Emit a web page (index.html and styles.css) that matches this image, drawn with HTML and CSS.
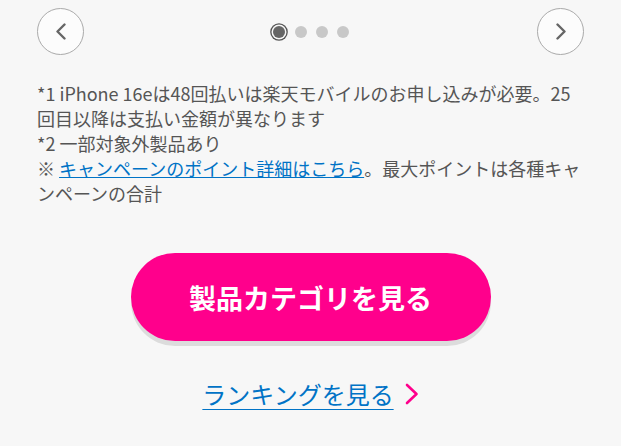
FILE: index.html
```html
<!DOCTYPE html>
<html>
<head>
    <link rel="stylesheet" href="styles.css">
</head>
<body>
    <div class="page">
        <div class="slider-nav">
            <button class="nav-btn" aria-label="前へ">
                <svg width="12" height="17" viewBox="0 0 12 17"><path d="M9.5 1.5 L2.5 8.5 L9.5 15.5" fill="none" stroke="#666" stroke-width="2.4" stroke-linecap="round" stroke-linejoin="round"/></svg>
            </button>
            <div class="dots">
                <span class="dot active"></span>
                <span class="dot"></span>
                <span class="dot"></span>
                <span class="dot"></span>
            </div>
            <button class="nav-btn" aria-label="次へ">
                <svg width="12" height="17" viewBox="0 0 12 17"><path d="M2.5 1.5 L9.5 8.5 L2.5 15.5" fill="none" stroke="#666" stroke-width="2.4" stroke-linecap="round" stroke-linejoin="round"/></svg>
            </button>
        </div>

        <div class="notes">
            <p>*1 iPhone 16eは48回払いは楽天モバイルのお申し込みが必要。25回目以降は支払い金額が異なります</p>
            <p>*2 一部対象外製品あり</p>
            <p>※ <a href="#">キャンペーンのポイント詳細はこちら</a>。最大ポイントは各種キャンペーンの合計</p>
        </div>

        <div class="cta">
            <a class="cta-btn" href="#">製品カテゴリを見る</a>
        </div>

        <div class="ranking">
            <a class="ranking-link" href="#">ランキングを見る</a>
            <svg class="ranking-arrow" width="14" height="22" viewBox="0 0 14 22"><path d="M2 2 L11.5 11 L2 20" fill="none" stroke="#ff008c" stroke-width="2.6" stroke-linecap="round" stroke-linejoin="round"/></svg>
        </div>
    </div>
</body>
</html>
```

FILE: styles.css
```css
/* ベース */
body {
    margin: 0;
    background: #f7f7f7;
    font-family: "Noto Sans CJK JP", "Noto Sans", sans-serif;
    color: #555;
}

.page {
    padding: 8px 37px 0;
}

/* スライダーのナビ */
.slider-nav {
    display: flex;
    align-items: center;
    justify-content: space-between;
}

.nav-btn {
    width: 47px;
    height: 47px;
    border: 1px solid #aaa;
    border-radius: 50%;
    background: #fcfcfc;
    display: flex;
    align-items: center;
    justify-content: center;
    padding: 0;
    cursor: pointer;
}

.dots {
    display: flex;
    align-items: center;
    gap: 9px;
}

.dot {
    width: 12px;
    height: 12px;
    border-radius: 50%;
    background: #c8c8c8;
}

.dot.active {
    background: #666;
    box-shadow: 0 0 0 1.5px #f7f7f7, 0 0 0 2.8px #555;
    margin-right: 1px;
}

/* 注釈 */
.notes {
    margin-top: 26px;
    font-size: 18px;
    line-height: 25px;
}

.notes p {
    margin: 0;
}

.notes a {
    color: #0073c6;
    text-decoration: underline;
}

/* ボタン */
.cta {
    display: flex;
    justify-content: center;
    margin-top: 47px;
}

.cta-btn {
    width: 360px;
    height: 88px;
    border-radius: 44px;
    background: #ff008c;
    box-shadow: 0 5px 0 #dcdcdc;
    color: #fff;
    font-size: 27px;
    font-weight: bold;
    text-decoration: none;
    display: flex;
    align-items: center;
    justify-content: center;
}

.ranking {
    display: flex;
    justify-content: center;
    align-items: center;
    gap: 11px;
    margin-top: 37px;
}

.ranking-link {
    color: #0073c6;
    font-size: 24px;
    line-height: 32px;
    text-underline-offset: 5px;
    text-decoration-thickness: 2px;
}
```
